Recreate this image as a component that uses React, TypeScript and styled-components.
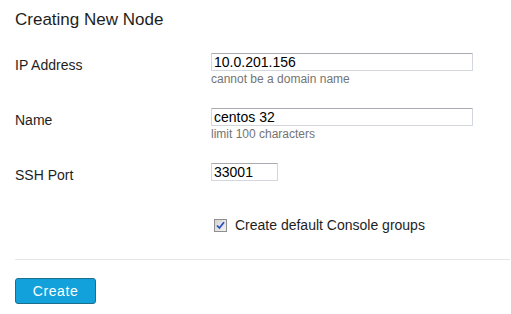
import styled, { createGlobalStyle } from "styled-components";

const GlobalStyle = createGlobalStyle`
    html, body {
        margin: 0;
        padding: 0;
        background: #ffffff;
    }
    body {
        font-family: "Liberation Sans", Arial, sans-serif;
        color: #222222;
    }
`;

const Page = styled.div`
    padding: 10px 1px 0 15px;
`;

const Title = styled.h3`
    margin: 0 0 23px 0;
    font-size: 17px;
    line-height: 20px;
    font-weight: normal;
    color: #1e1e1e;
`;

const FormGrid = styled.div`
    display: grid;
    grid-template-columns: 196px 1fr;
    row-gap: 21px;
`;

const Label = styled.label`
    padding-top: 3px;
    font-size: 14px;
    line-height: 18px;
    color: #1e1e1e;
`;

const Field = styled.div`
    display: flex;
    flex-direction: column;
    align-items: flex-start;
`;

const Input = styled.input<{ $width: number }>`
    box-sizing: border-box;
    width: ${(p) => p.$width}px;
    height: 18px;
    margin: 0;
    padding: 0 2px;
    border: 1px solid #d3d7dd;
    border-top-color: #a9abb1;
    border-radius: 1px;
    font-family: "Liberation Sans", Arial, sans-serif;
    font-size: 14px;
    line-height: 16px;
    color: #000000;
    background: #ffffff;
    outline: none;
`;

const Hint = styled.span`
    font-size: 12px;
    line-height: 16px;
    color: #747474;
`;

const CheckRow = styled.label`
    grid-column: 2;
    display: flex;
    align-items: center;
    gap: 8px;
    margin-top: 11px;
    padding-left: 3px;
    font-size: 14px;
    line-height: 18px;
    color: #1e1e1e;
`;

const CheckBox = styled.span`
    box-sizing: border-box;
    display: inline-flex;
    align-items: center;
    justify-content: center;
    width: 13px;
    height: 13px;
    border: 1px solid #8e8f8f;
    background: linear-gradient(135deg, #d4d4d4 0%, #f2f2f2 100%);
`;

const Divider = styled.hr`
    margin: 25px 0 18px 0;
    border: none;
    border-top: 1px solid #e5e5e5;
`;

const Button = styled.button`
    box-sizing: border-box;
    width: 81px;
    height: 26px;
    margin: 0;
    padding: 0;
    border: 1px solid #1a6f8c;
    border-radius: 3px;
    background: #12a1da;
    color: #ffffff;
    font-family: "Liberation Sans", Arial, sans-serif;
    font-size: 14px;
    letter-spacing: 0.6px;
    cursor: pointer;
`;

export default function App() {
    return (
        <Page>
            <GlobalStyle />
            <Title>Creating New Node</Title>
            <FormGrid>
                <Label htmlFor="ip">IP Address</Label>
                <Field>
                    <Input id="ip" $width={262} defaultValue="10.0.201.156" />
                    <Hint>cannot be a domain name</Hint>
                </Field>

                <Label htmlFor="name">Name</Label>
                <Field>
                    <Input id="name" $width={262} defaultValue="centos 32" />
                    <Hint>limit 100 characters</Hint>
                </Field>

                <Label htmlFor="port">SSH Port</Label>
                <Field>
                    <Input id="port" $width={67} defaultValue="33001" />
                </Field>

                <CheckRow>
                    <CheckBox>
                        <svg width="9" height="9" viewBox="0 0 9 9">
                            <path
                                d="M1 4.5 L3.4 7 L8 1.2"
                                fill="none"
                                stroke="#2b4fc4"
                                strokeWidth="1.8"
                            />
                        </svg>
                    </CheckBox>
                    Create default Console groups
                </CheckRow>
            </FormGrid>
            <Divider />
            <Button type="button">Create</Button>
        </Page>
    );
}
